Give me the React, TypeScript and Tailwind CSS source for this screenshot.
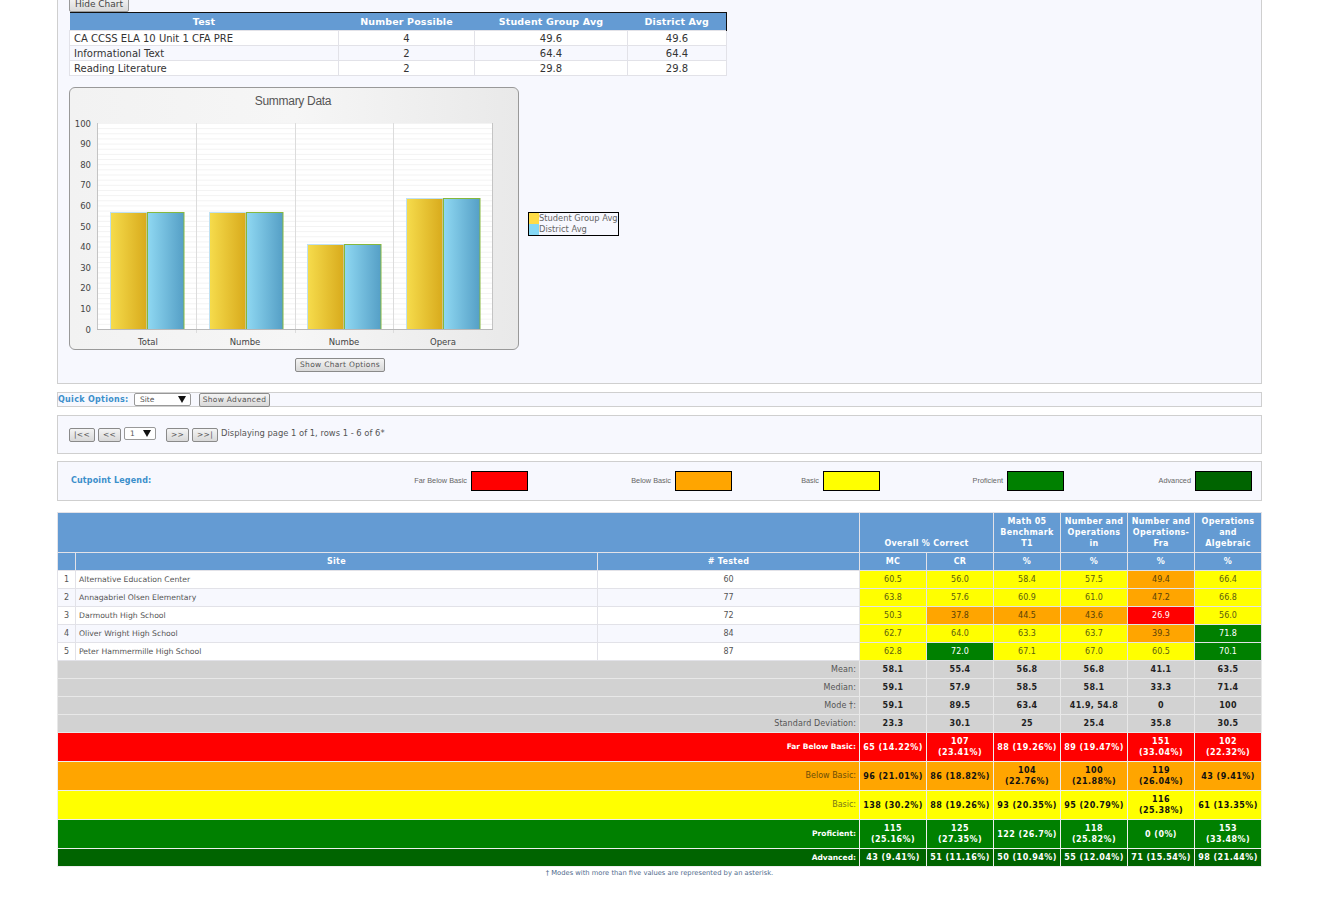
const summaryRows = [
  ['CA CCSS ELA 10 Unit 1 CFA PRE', '4', '49.6', '49.6'],
  ['Informational Text', '2', '64.4', '64.4'],
  ['Reading Literature', '2', '29.8', '29.8'],
]

const bars = [
  { x: 110, top: 212, label: 'Total' },
  { x: 209, top: 212, label: 'Numbe' },
  { x: 307, top: 244, label: 'Numbe' },
  { x: 406, top: 198, label: 'Opera' },
]

const cutColors: Record<string, string> = {
  r: 'bg-[#ff0000] text-white',
  o: 'bg-[#ffa500] text-[#5a4208]',
  y: 'bg-[#ffff00] text-[#5c5c10]',
  g: 'bg-[#008000] text-white',
}

const sites: { name: string; tested: string; cells: [string, string][] }[] = [
  { name: 'Alternative Education Center', tested: '60', cells: [['60.5', 'y'], ['56.0', 'y'], ['58.4', 'y'], ['57.5', 'y'], ['49.4', 'o'], ['66.4', 'y']] },
  { name: 'Annagabriel Olsen Elementary', tested: '77', cells: [['63.8', 'y'], ['57.6', 'y'], ['60.9', 'y'], ['61.0', 'y'], ['47.2', 'o'], ['66.8', 'y']] },
  { name: 'Darmouth High School', tested: '72', cells: [['50.3', 'y'], ['37.8', 'o'], ['44.5', 'o'], ['43.6', 'o'], ['26.9', 'r'], ['56.0', 'y']] },
  { name: 'Oliver Wright High School', tested: '84', cells: [['62.7', 'y'], ['64.0', 'y'], ['63.3', 'y'], ['63.7', 'y'], ['39.3', 'o'], ['71.8', 'g']] },
  { name: 'Peter Hammermille High School', tested: '87', cells: [['62.8', 'y'], ['72.0', 'g'], ['67.1', 'y'], ['67.0', 'y'], ['60.5', 'y'], ['70.1', 'g']] },
]

const stats = [
  { label: 'Mean:', values: ['58.1', '55.4', '56.8', '56.8', '41.1', '63.5'] },
  { label: 'Median:', values: ['59.1', '57.9', '58.5', '58.1', '33.3', '71.4'] },
  { label: 'Mode †:', values: ['59.1', '89.5', '63.4', '41.9, 54.8', '0', '100'] },
  { label: 'Standard Deviation:', values: ['23.3', '30.1', '25', '25.4', '35.8', '30.5'] },
]

const bands = [
  { label: 'Far Below Basic:', row: 'bg-[#ff0000] text-white', labelColor: 'text-white font-bold text-[7.5px]', h: 'h-[29px]', values: ['65 (14.22%)', '107 (23.41%)', '88 (19.26%)', '89 (19.47%)', '151 (33.04%)', '102 (22.32%)'] },
  { label: 'Below Basic:', row: 'bg-[#ffa500] text-[#111]', labelColor: 'text-[#6b4d08] font-normal', h: 'h-[29px]', values: ['96 (21.01%)', '86 (18.82%)', '104 (22.76%)', '100 (21.88%)', '119 (26.04%)', '43 (9.41%)'] },
  { label: 'Basic:', row: 'bg-[#ffff00] text-[#111]', labelColor: 'text-[#77771a] font-normal', h: 'h-[29px]', values: ['138 (30.2%)', '88 (19.26%)', '93 (20.35%)', '95 (20.79%)', '116 (25.38%)', '61 (13.35%)'] },
  { label: 'Proficient:', row: 'bg-[#008000] text-white', labelColor: 'text-white font-bold text-[7.5px]', h: 'h-[29px]', values: ['115 (25.16%)', '125 (27.35%)', '122 (26.7%)', '118 (25.82%)', '0 (0%)', '153 (33.48%)'] },
  { label: 'Advanced:', row: 'bg-[#006400] text-white', labelColor: 'text-white font-bold text-[7.5px]', h: 'h-[18px]', values: ['43 (9.41%)', '51 (11.16%)', '50 (10.94%)', '55 (12.04%)', '71 (15.54%)', '98 (21.44%)'] },
]

const legend = [
  { label: 'Far Below Basic', color: 'bg-[#ff0000]', margin: 'ml-[262px]', width: 'w-[53px]' },
  { label: 'Below Basic', color: 'bg-[#ffa500]', margin: 'ml-[103px]', width: 'w-[40px]' },
  { label: 'Basic', color: 'bg-[#ffff00]', margin: 'ml-[69px]', width: 'w-[18px]' },
  { label: 'Proficient', color: 'bg-[#008000]', margin: 'ml-[91px]', width: 'w-[32px]' },
  { label: 'Advanced', color: 'bg-[#006400]', margin: 'ml-[94px]', width: 'w-[33px]' },
]

function SmallButton({ label, className }: { label: string; className: string }) {
  return (
    <button
      type="button"
      className={`h-[14px] rounded-[2px] border border-[#8a8a8a] bg-gradient-to-b from-[#f4f4f4] to-[#d8d8d8] text-center text-[7.5px] leading-[12px] tracking-[0.3px] text-[#555] ${className}`}
    >
      {label}
    </button>
  )
}

function FakeSelect({ label, className }: { label: string; className: string }) {
  return (
    <div className={`flex h-[13px] items-center justify-between rounded-[2px] border border-[#999] bg-white pl-[5px] pr-[4px] text-[7.5px] text-[#555] ${className}`}>
      <span>{label}</span>
      <svg width="8" height="7" viewBox="0 0 8 7">
        <path d="M0 0h8L4 7z" fill="#111" />
      </svg>
    </div>
  )
}

function SummaryChart() {
  const gridMinor: number[] = []
  for (let i = 0; i <= 40; i++) gridMinor.push(123.5 + i * 5.15)

  return (
    <svg width="450" height="263" viewBox="69 87 450 263" className="block">
      <defs>
        <linearGradient id="yellowBar" x1="0" x2="1" y1="0" y2="0">
          <stop offset="0" stopColor="#f6dc4c" />
          <stop offset="1" stopColor="#d8aa1c" />
        </linearGradient>
        <linearGradient id="blueBar" x1="0" x2="1" y1="0" y2="0">
          <stop offset="0" stopColor="#8fd8f2" />
          <stop offset="1" stopColor="#559fc6" />
        </linearGradient>
      </defs>
      <text x="293" y="105" textAnchor="middle" fontSize="12" letterSpacing="-0.3" fill="#555" fontFamily="'Liberation Sans', sans-serif">
        Summary Data
      </text>
      <rect x="97.5" y="123.5" width="395" height="206" fill="#fff" stroke="#c4c4c4" />
      {gridMinor.map((y) => (
        <line key={y} x1="98" x2="492" y1={y} y2={y} stroke="#f3f3f3" />
      ))}
      {[196.5, 295.5, 393.5].map((x) => (
        <line key={x} x1={x} x2={x} y1="123" y2="333" stroke="#dcdcdc" />
      ))}
      {bars.map((b) => (
        <g key={b.x}>
          <rect x={b.x + 0.5} y={b.top + 0.5} width="36.5" height={329 - b.top} fill="url(#yellowBar)" stroke="#bfe0f2" />
          <rect x={b.x + 37.5} y={b.top + 0.5} width="36.5" height={329 - b.top} fill="url(#blueBar)" stroke="#86b83c" />
        </g>
      ))}
      <line x1="97" x2="493" y1="329.5" y2="329.5" stroke="#b8b8b8" />
      {[100, 90, 80, 70, 60, 50, 40, 30, 20, 10, 0].map((v, i) => (
        <text key={v} x="91" y={126.5 + i * 20.6} textAnchor="end" fontSize="8.5" fill="#444" fontFamily="'DejaVu Sans', sans-serif">
          {v}
        </text>
      ))}
      {bars.map((b, i) => (
        <text key={i} x={[148, 245, 344, 443][i]} y="345" textAnchor="middle" fontSize="8.5" fill="#444" fontFamily="'DejaVu Sans', sans-serif">
          {b.label}
        </text>
      ))}
    </svg>
  )
}

export default function App() {
  return (
    <div className="h-[921px] overflow-hidden bg-white pl-[57px] pr-[57px] font-['DejaVu_Sans',sans-serif]">
      <div className="-mt-[4px] h-[388px] border border-[#cfcfcf] bg-[#f7f8fe] pl-[11px]">
        <button
          type="button"
          className="block h-[15px] w-[60px] rounded-[2px] border border-[#999] bg-gradient-to-b from-[#f4f4f4] to-[#d9d9d9] text-center text-[9px] leading-[13px] text-[#444]"
        >
          Hide Chart
        </button>

        <table className="w-[657px] table-fixed border-collapse text-[10px] leading-[13px] text-[#333]">
          <colgroup>
            <col className="w-[269px]" />
            <col className="w-[136px]" />
            <col className="w-[153px]" />
            <col className="w-[99px]" />
          </colgroup>
          <thead>
            <tr className="h-[18px] bg-[#649bd3] text-[9.5px] font-bold tracking-[0.15px] text-white">
              <th className="border-t border-t-[#111] p-0">Test</th>
              <th className="border-t border-t-[#111] p-0">Number Possible</th>
              <th className="border-t border-t-[#111] p-0">Student Group Avg</th>
              <th className="border-t border-r border-t-[#111] border-r-[#111] p-0">District Avg</th>
            </tr>
          </thead>
          <tbody>
            {summaryRows.map((row, i) => (
              <tr key={row[0]} className={`h-[15px] ${i % 2 === 0 ? 'bg-white' : 'bg-[#f7f8fe]'}`}>
                {row.map((cell, j) => (
                  <td key={j} className={`border border-[#e2e2e8] p-0 ${j === 0 ? 'pl-[4px] text-left' : 'text-center'}`}>
                    {cell}
                  </td>
                ))}
              </tr>
            ))}
          </tbody>
        </table>

        <div className="mt-[11px] flex items-start">
          <div className="h-[263px] w-[450px] rounded-[6px] border border-[#999] bg-gradient-to-r from-[#f2f2f2] via-[#f6f6f6] to-[#e9e9e9]">
            <div className="-m-px">
              <SummaryChart />
            </div>
          </div>
          <div className="ml-[9px] mt-[125px] w-[91px] border border-black text-[8.3px] leading-[11px] text-[#666]">
            <div className="flex items-center">
              <span className="h-[11px] w-[10px] bg-[#ffdc46]" />
              <span className="whitespace-nowrap">Student Group Avg</span>
            </div>
            <div className="flex items-center">
              <span className="h-[11px] w-[10px] bg-[#85d8f5]" />
              <span className="whitespace-nowrap">District Avg</span>
            </div>
          </div>
        </div>

        <SmallButton label="Show Chart Options" className="ml-[226px] mt-[8px] block w-[90px]" />
      </div>

      <div className="mt-[8px] flex h-[15px] items-center border border-[#cfcfcf] bg-[#f7f8fe]">
        <span className="w-[76px] whitespace-nowrap text-[8px] font-bold tracking-[0.3px] text-[#3b8fcb]">Quick Options:</span>
        <FakeSelect label="Site" className="w-[57px]" />
        <SmallButton label="Show Advanced" className="ml-[8px] w-[71px]" />
      </div>

      <div className="mt-[8px] flex h-[39px] items-center border border-[#cfcfcf] bg-[#f7f8fe] pl-[11px]">
        <SmallButton label="|<<" className="mt-[1px] w-[26px]" />
        <SmallButton label="<<" className="ml-[3px] mt-[1px] w-[23px]" />
        <FakeSelect label="1" className="ml-[3px] mb-[2px] w-[32px]" />
        <SmallButton label=">>" className="ml-[10px] mt-[1px] w-[23px]" />
        <SmallButton label=">>|" className="ml-[3px] mt-[1px] w-[26px]" />
        <span className="ml-[3px] mb-[3px] text-[8.4px] text-[#555]">Displaying page 1 of 1, rows 1 - 6 of 6*</span>
      </div>

      <div className="mt-[7px] flex h-[40px] items-center border border-[#cfcfcf] bg-[#f7f8fe] pl-[13px]">
        <span className="w-[81px] whitespace-nowrap text-[8px] font-bold tracking-[0.15px] text-[#3b8fcb]">Cutpoint Legend:</span>
        {legend.map((item) => (
          <div key={item.label} className={`flex items-center ${item.margin}`}>
            <span className={`mr-[4px] whitespace-nowrap text-right font-['Liberation_Sans',sans-serif] text-[7.3px] text-[#666] ${item.width}`}>{item.label}</span>
            <span className={`h-[20px] w-[57px] border border-black ${item.color}`} />
          </div>
        ))}
      </div>

      <table className="mt-[11px] w-[1204px] table-fixed border-collapse text-[8px] text-[#555]">
        <colgroup>
          <col className="w-[18px]" />
          <col className="w-[522px]" />
          <col className="w-[262px]" />
          <col className="w-[67px]" />
          <col className="w-[67px]" />
          <col className="w-[67px]" />
          <col className="w-[67px]" />
          <col className="w-[67px]" />
          <col className="w-[67px]" />
        </colgroup>
        <thead className="bg-[#649bd3] text-[8px] font-bold leading-[11px] tracking-[0.3px] text-white">
          <tr className="h-[40px]">
            <th colSpan={3} className="border border-[#e2e2e8] p-0" />
            <th colSpan={2} className="border border-[#e2e2e8] p-0 pb-[3px] align-bottom">Overall % Correct</th>
            <th className="border border-[#e2e2e8] px-[3px] py-0">Math 05 Benchmark T1</th>
            <th className="border border-[#e2e2e8] px-[3px] py-0">Number and Operations in</th>
            <th className="border border-[#e2e2e8] px-[3px] py-0">Number and Operations-Fra</th>
            <th className="border border-[#e2e2e8] px-[3px] py-0">Operations and Algebraic</th>
          </tr>
          <tr className="h-[18px]">
            <th className="border border-[#e2e2e8] p-0" />
            <th className="border border-[#e2e2e8] p-0">Site</th>
            <th className="border border-[#e2e2e8] p-0"># Tested</th>
            <th className="border border-[#e2e2e8] p-0">MC</th>
            <th className="border border-[#e2e2e8] p-0">CR</th>
            <th className="border border-[#e2e2e8] p-0">%</th>
            <th className="border border-[#e2e2e8] p-0">%</th>
            <th className="border border-[#e2e2e8] p-0">%</th>
            <th className="border border-[#e2e2e8] p-0">%</th>
          </tr>
        </thead>
        <tbody>
          {sites.map((site, i) => (
            <tr key={site.name} className={`h-[18px] ${i % 2 === 0 ? 'bg-white' : 'bg-[#f7f8fe]'}`}>
              <td className="border border-[#e2e2e8] p-0 text-center">{i + 1}</td>
              <td className="border border-[#e2e2e8] p-0 pl-[3px] text-[7.7px]">{site.name}</td>
              <td className="border border-[#e2e2e8] p-0 text-center">{site.tested}</td>
              {site.cells.map(([value, cut], j) => (
                <td key={j} className={`border border-[#e2e2e8] p-0 text-center ${cutColors[cut]}`}>
                  {value}
                </td>
              ))}
            </tr>
          ))}
          {stats.map((stat) => (
            <tr key={stat.label} className="h-[18px] bg-[#d2d2d2]">
              <td colSpan={3} className="border border-[#e8e8e8] p-0 pr-[3px] text-right tracking-[0.1px]">{stat.label}</td>
              {stat.values.map((value, j) => (
                <td key={j} className="border border-[#e8e8e8] p-0 text-center font-bold tracking-[0.3px] text-[#222]">{value}</td>
              ))}
            </tr>
          ))}
          {bands.map((band) => (
            <tr key={band.label} className={`${band.h} ${band.row}`}>
              <td colSpan={3} className={`border border-[#eeeeee] p-0 pr-[3px] text-right ${band.labelColor}`}>{band.label}</td>
              {band.values.map((value, j) => (
                <td key={j} className="border border-[#eeeeee] px-[2px] py-0 text-center font-bold leading-[11px] tracking-[0.45px]">{value}</td>
              ))}
            </tr>
          ))}
        </tbody>
      </table>

      <p className="mt-[1px] text-center text-[6.75px] leading-[10px] text-[#4f6b8c]">
        † Modes with more than five values are represented by an asterisk.
      </p>
    </div>
  )
}
